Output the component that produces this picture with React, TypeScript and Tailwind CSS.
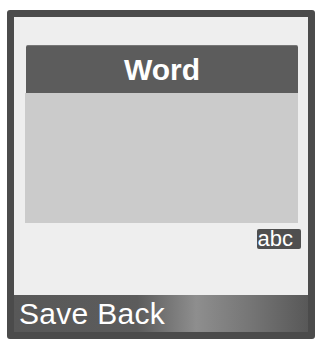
export default function App() {
  return (
    <div
      className="w-[320px] h-[342px] bg-white pt-[10px] pl-[7px]"
      style={{ fontFamily: '"Liberation Sans", Arial, sans-serif' }}
    >
      {/* Phone screen frame */}
      <div className="w-[308px] h-[329px] border-[7px] border-[#4b4b4b] rounded-[3px] bg-[#eeeeee] flex flex-col">
        {/* Title */}
        <div className="mt-[28px] ml-[12px] mr-[10px] h-[48px] bg-[#5c5c5c] border-t border-[#777] rounded-t-[2px] flex items-center justify-center">
          <span className="text-white font-bold text-[30px] leading-none">Word</span>
        </div>

        {/* Text field */}
        <div className="ml-[11px] mr-[10px] h-[130px] bg-[#cbcbcb]" />

        {/* Input mode */}
        <div className="flex justify-end mt-[6px] mr-[7px]">
          <span className="h-[20px] bg-[#4f4f4f] rounded-[2px] pl-[1px] pr-[8px] flex items-center text-white text-[22px] leading-none">
            abc
          </span>
        </div>

        {/* Softkeys */}
        <div className="mt-auto h-[37px] flex items-center pl-[5px] bg-[linear-gradient(to_right,#585858_0%,#5c5c5c_42%,#8e8e8e_62%,#767676_80%,#585858_100%)]">
          <span className="text-white text-[30px] leading-none tracking-[0.3px]">Save Back</span>
        </div>
      </div>
    </div>
  );
}
